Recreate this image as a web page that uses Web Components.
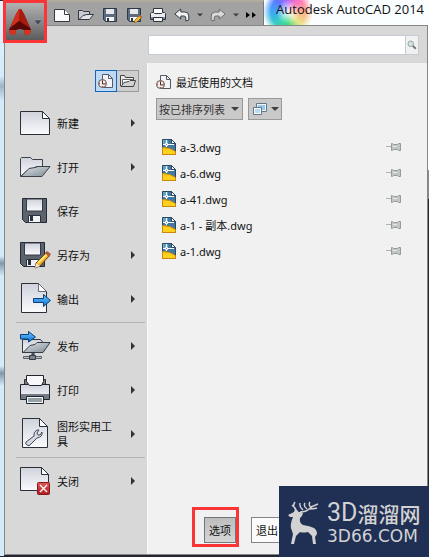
<!DOCTYPE html>
<html lang="zh-CN">
    <head>
        <meta charset="utf-8" />
        <meta name="viewport" content="width=device-width, initial-scale=1" />
        <title>Autodesk AutoCAD 2014</title>
        <style>
            html {
                font: 11px/15px "Noto Sans", "Noto Sans CJK SC", sans-serif;
                color: #111;
            }
            body {
                margin: 0;
                background: #232532;
            }
        </style>
    </head>
    <body>
        <cad-window></cad-window>

        <template id="cad-icon">
            <style>
                :host {
                    display: block;
                    flex: none;
                    width: 16px;
                    height: 16px;
                }
                :host([size="large"]) {
                    width: 32px;
                    height: 32px;
                }
                :host([size="small"]) {
                    width: 8px;
                    height: 8px;
                }
                svg {
                    display: block;
                    width: 100%;
                    height: 100%;
                }
            </style>
        </template>

        <template id="cad-quick-bar">
            <style>
                :host {
                    display: flex;
                    align-items: center;
                    gap: 8px;
                    box-sizing: border-box;
                    height: 25px;
                    padding: 2px 7px 0 50px;
                    border-top: 2px solid #b0ad9c;
                    border-right: 1px solid #777;
                    background: #a2a2a2;
                }
                button {
                    display: block;
                    padding: 0;
                    border: 0;
                    background: none;
                }
                .narrow {
                    display: flex;
                    justify-content: center;
                    width: 4px;
                }
                .narrow [size] {
                    width: 6px;
                    height: 6px;
                }
                .more {
                    width: 10px;
                }
            </style>
            <button aria-label="新建"><cad-icon name="new"></cad-icon></button>
            <button aria-label="打开"><cad-icon name="open"></cad-icon></button>
            <button aria-label="保存"><cad-icon name="save"></cad-icon></button>
            <button aria-label="另存为"><cad-icon name="saveas"></cad-icon></button>
            <button aria-label="打印"><cad-icon name="print"></cad-icon></button>
            <button aria-label="放弃"><cad-icon name="undo"></cad-icon></button>
            <button class="narrow" aria-label="放弃列表"><cad-icon name="caret" size="small"></cad-icon></button>
            <button aria-label="重做"><cad-icon name="redo"></cad-icon></button>
            <button class="narrow" aria-label="重做列表"><cad-icon name="caret" size="small"></cad-icon></button>
            <button class="narrow more" aria-label="更多"><cad-icon name="more"></cad-icon></button>
        </template>

        <template id="cad-app-button">
            <style>
                :host {
                    display: block;
                    border: 3px solid #fb3535;
                }
                button {
                    display: flex;
                    align-items: center;
                    gap: 2px;
                    width: 38px;
                    height: 37px;
                    padding: 0 2px;
                    border: 0;
                    background: linear-gradient(#b1b1b1, #858585 55%, #5b5b5b);
                }
                .logo {
                    flex: none;
                    width: 24px;
                    height: 28px;
                }
            </style>
            <button aria-label="应用程序菜单">
                <svg class="logo" viewBox="0 0 24 28">
                    <path d="M11 1h2l3 5 7 16-1 4-5 1-1-5q-4-2-8 0l-1 5-5-1-1-4L8 6z" fill="#9c170e" />
                    <path d="M11 1h1l-1 12-9 8L8 6z" fill="#cf2f1b" />
                    <path d="M12 1h1l3 5 6 14-11-7z" fill="#a81c10" />
                    <path d="M11 13l11 7 1 2-7 0q-4-2-8 0l-7 0 1-2z" fill="#5a0806" />
                    <path d="M1 22l7 0-1 5-5-1zM23 22l-7 0 1 5 5-1z" fill="#d8321e" />
                </svg>
                <cad-icon name="appcaret" size="small"></cad-icon>
            </button>
        </template>

        <template id="cad-search">
            <style>
                :host {
                    display: flex;
                    box-sizing: border-box;
                    height: 20px;
                    border: 1px solid #c5cbd2;
                    background: #fff;
                }
                input {
                    flex: 1;
                    min-width: 0;
                    padding: 0 4px;
                    border: 0;
                    outline: 0;
                    background: none;
                    font: inherit;
                }
                button {
                    display: flex;
                    align-items: center;
                    justify-content: center;
                    width: 13px;
                    padding: 0;
                    border: 0;
                    border-left: 1px solid #c5cbd2;
                    background: #f1f1f1;
                }
                cad-icon {
                    width: 10px;
                    height: 10px;
                }
            </style>
            <input type="search" aria-label="搜索" />
            <button aria-label="搜索"><cad-icon name="search"></cad-icon></button>
        </template>

        <template id="cad-menu-item">
            <style>
                :host {
                    display: block;
                }
                button {
                    display: flex;
                    align-items: center;
                    gap: 6px;
                    width: 100%;
                    height: 44px;
                    padding: 0 10px 0 14px;
                    border: 0;
                    background: none;
                    color: inherit;
                    font: inherit;
                    text-align: left;
                }
                .label {
                    flex: 1;
                    min-width: 0;
                    padding-right: 8px;
                }
            </style>
            <button>
                <cad-icon size="large"></cad-icon>
                <span class="label"><slot></slot></span>
                <cad-icon class="arrow" name="arrow" size="small"></cad-icon>
            </button>
        </template>

        <template id="cad-sidebar">
            <style>
                :host {
                    display: block;
                    padding-top: 7px;
                }
                .tabs {
                    display: flex;
                    justify-content: flex-end;
                    padding: 0 8px 9px 0;
                }
                .tabs button {
                    display: flex;
                    align-items: center;
                    justify-content: center;
                    box-sizing: border-box;
                    width: 22px;
                    height: 22px;
                    padding: 0;
                    border: 1px solid #999;
                    border-left: 0;
                    background: #cfcfcf;
                }
                .tabs .active {
                    border: 1px solid #1466bd;
                    background: #bcdaf5;
                }
                hr {
                    height: 1px;
                    margin: 1px 2px 1px 11px;
                    border: 0;
                    background: #b5b5b5;
                }
            </style>
            <div class="tabs">
                <button class="active" aria-label="最近使用的文档"><cad-icon name="recent"></cad-icon></button>
                <button aria-label="打开的文档"><cad-icon name="opendocs"></cad-icon></button>
            </div>
            <nav>
                <cad-menu-item icon="new">新建</cad-menu-item>
                <cad-menu-item icon="open">打开</cad-menu-item>
                <cad-menu-item icon="save" plain>保存</cad-menu-item>
                <cad-menu-item icon="saveas">另存为</cad-menu-item>
                <cad-menu-item icon="export">输出</cad-menu-item>
                <hr />
                <cad-menu-item icon="publish">发布</cad-menu-item>
                <cad-menu-item icon="print">打印</cad-menu-item>
                <cad-menu-item icon="tools">图形实用工具</cad-menu-item>
                <hr />
                <cad-menu-item icon="close">关闭</cad-menu-item>
            </nav>
        </template>

        <template id="cad-file">
            <style>
                :host {
                    display: flex;
                    align-items: center;
                    gap: 3px;
                    height: 26px;
                }
                a {
                    flex: 1;
                    color: inherit;
                    text-decoration: none;
                    white-space: nowrap;
                }
                button {
                    padding: 0;
                    border: 0;
                    background: none;
                }
            </style>
            <cad-icon name="dwg"></cad-icon>
            <a href="#"><slot></slot></a>
            <button aria-label="固定"><cad-icon name="pin"></cad-icon></button>
        </template>

        <template id="cad-documents">
            <style>
                :host {
                    display: flex;
                    flex-direction: column;
                    padding: 8px 8px 11px;
                    background: #f1f1f1;
                }
                h2 {
                    display: flex;
                    align-items: center;
                    gap: 4px;
                    height: 22px;
                    margin: 0 0 5px;
                    font: inherit;
                }
                .filters {
                    display: flex;
                    gap: 5px;
                    margin-bottom: 14px;
                }
                .sort {
                    display: grid;
                    grid-template-columns: 1fr 12px;
                    align-items: center;
                    width: 87px;
                }
                .sort select {
                    grid-area: 1 / 1 / 2 / 3;
                    appearance: none;
                    box-sizing: border-box;
                    height: 22px;
                    padding: 0 2px;
                    border: 1px solid #999;
                    border-radius: 0;
                    background: #c9c9c9;
                    color: #333;
                    font: inherit;
                }
                .sort cad-icon {
                    grid-area: 1 / 2;
                    pointer-events: none;
                }
                .view {
                    display: flex;
                    align-items: center;
                    justify-content: space-between;
                    box-sizing: border-box;
                    width: 34px;
                    height: 22px;
                    padding: 0 2px 0 3px;
                    border: 1px solid #999;
                    background: #c9c9c9;
                }
                .files {
                    flex: 1;
                    padding: 0 18px 0 5px;
                }
                footer {
                    display: flex;
                    gap: 15px;
                    padding-left: 48px;
                }
                .action {
                    position: relative;
                }
                .action button {
                    display: block;
                    box-sizing: border-box;
                    height: 26px;
                    padding: 0 4px;
                    border: 1px solid #858585;
                    background: #fbfbfb;
                    color: #111;
                    font: inherit;
                    white-space: nowrap;
                }
                .marked button {
                    background: linear-gradient(#bdbdbd, #d6d6d6);
                    border-color: #6f777b;
                }
                .marked::after {
                    content: "";
                    position: absolute;
                    inset: -10px -3px -4px -12px;
                    border: 3px solid #fb3535;
                    pointer-events: none;
                }
            </style>
            <h2><cad-icon name="recent"></cad-icon>最近使用的文档</h2>
            <div class="filters">
                <div class="sort">
                    <select aria-label="排序方式">
                        <option>按已排序列表</option>
                    </select>
                    <cad-icon name="caret" size="small"></cad-icon>
                </div>
                <button class="view" aria-label="显示方式">
                    <cad-icon name="view"></cad-icon>
                    <cad-icon name="caret" size="small"></cad-icon>
                </button>
            </div>
            <div class="files">
                <cad-file>a-3.dwg</cad-file>
                <cad-file>a-6.dwg</cad-file>
                <cad-file>a-41.dwg</cad-file>
                <cad-file>a-1 - 副本.dwg</cad-file>
                <cad-file>a-1.dwg</cad-file>
            </div>
            <footer>
                <div class="action marked"><button>选项</button></div>
                <div class="action"><button>退出</button></div>
            </footer>
        </template>

        <template id="cad-watermark">
            <style>
                :host {
                    display: flex;
                    gap: 6px;
                    box-sizing: border-box;
                    width: 150px;
                    height: 71px;
                    padding: 14px 4px 0 8px;
                    background: #203055;
                    color: #d2d2d2;
                }
                svg {
                    flex: none;
                    width: 34px;
                    height: 46px;
                }
                .name {
                    display: flex;
                    align-items: center;
                    height: 26px;
                    font: 500 21px/26px "Noto Sans CJK SC", sans-serif;
                    white-space: nowrap;
                }
                .latin {
                    font: 25px/26px Roboto, sans-serif;
                }
                .site {
                    font: 17px/20px "DejaVu Sans", sans-serif;
                    white-space: nowrap;
                }
            </style>
            <svg viewBox="0 0 34 46" fill="currentColor">
                <path d="M1 15l6-3 1-3 3 3h3l2 1-1 3-2 2q-1 5 3 7 7 1 11 3 3 2 3 6l-2 3 1 7h-3l-1-8-4-4q-6 1-8 0l-4 4-2 8H4l2-10-1-3Q2 26 6 17l-3 0z" />
                <path d="M11 12Q8 9 7 7t1-5M9 9L5 5M13 12q6 0 9-3t9-5M16 10q-4-3-3-7M20 9q-4-3-2-6M24 7q-3-2-1-5M22 9q5 0 8-1" fill="none" stroke="currentColor" stroke-width="1.4" />
            </svg>
            <div>
                <div class="name"><span class="latin">3D</span>溜溜网</div>
                <div class="site">3D66.COM</div>
            </div>
        </template>

        <template id="cad-window">
            <style>
                :host {
                    display: flex;
                    flex-direction: column;
                    position: relative;
                    box-sizing: border-box;
                    min-height: 100vh;
                    padding: 0 1px 2px 4px;
                    background:
                        linear-gradient(#fff 170px, #8a8a8a 170px, #8a8a8a 199px, #232532 199px) right / 1px 100% no-repeat,
                        linear-gradient(#e3f2fc, #d4ebfa 75px, #9db5c8 85px, #d4ebfa 100px, #d4ebfa 255px, #8298aa 262px, #d4ebfa 275px, #d4ebfa 365px, #8298aa 372px, #d4ebfa 385px) left / 4px calc(100% - 2px) no-repeat;
                }
                header {
                    display: flex;
                    height: 25px;
                }
                h1 {
                    flex: 1;
                    box-sizing: border-box;
                    margin: 0 -1px 0 0;
                    padding: 0 5px 0 0;
                    /* blurred wallpaper seen through the title bar */
                    background:
                        radial-gradient(circle at 24px 12px, #fafeffcc 2px, #fafeff00 12px, #fafeff00 17px, #fafeff 25px),
                        conic-gradient(at 24px 12px, #b566f2, #ff74c0, #ffb088, #e8e48a, #3fdc83, #35cfc0, #3fa9f5, #5a78ff, #b566f2);
                    font: 13px/18px "Open Sans", sans-serif;
                    text-align: right;
                    white-space: nowrap;
                    color: #111;
                }
                main {
                    display: grid;
                    grid-template-columns: 142px 1fr;
                    grid-template-rows: auto 1fr;
                    flex: 1;
                    border: 1px solid #868686;
                    background: #d8d8d8;
                }
                cad-search {
                    grid-column: 2;
                    margin: 9px 8px 8px 1px;
                }
                cad-documents {
                    border-left: 1px solid #fafafa;
                }
                cad-app-button {
                    position: absolute;
                    top: 0;
                    left: 3px;
                }
                cad-watermark {
                    position: absolute;
                    right: 0;
                    bottom: 0;
                }
            </style>
            <header>
                <cad-quick-bar></cad-quick-bar>
                <h1>Autodesk AutoCAD 2014</h1>
            </header>
            <main>
                <cad-search></cad-search>
                <cad-sidebar></cad-sidebar>
                <cad-documents></cad-documents>
            </main>
            <cad-app-button></cad-app-button>
            <cad-watermark></cad-watermark>
        </template>

        <script type="text/javascript">
            const defs = `<defs>
                <linearGradient id="paper" x2="0" y2="1"><stop stop-color="#cfd2dc"/><stop offset="1" stop-color="#fbfbfd"/></linearGradient>
                <linearGradient id="flap" x2="1" y2="1"><stop stop-color="#e0e5e9"/><stop offset="1" stop-color="#7e8a94"/></linearGradient>
                <linearGradient id="blue" x2="0" y2="1"><stop stop-color="#6ac4ff"/><stop offset="1" stop-color="#0d74d6"/></linearGradient>
                <linearGradient id="red" x2="0" y2="1"><stop stop-color="#e05a5a"/><stop offset="1" stop-color="#b01c20"/></linearGradient>
            </defs>`;
            const disk = `<path d="M3.500 3.500h24v24h-21l-3-3z" fill="#5b636e" stroke="#252a33"/>
                <path d="M7.500 4h16v12h-16z" fill="url(#paper)" stroke="#343b46"/>
                <path d="M9.500 20.500h12v7h-12z" fill="#f0f2f5" stroke="#2b313b"/><path d="M11 21h3v5h-3z" fill="#2b313b"/>`;
            const smallDisk = `<path d="M1.500 1.500h13v13h-11l-2-2z" fill="#5c6b80" stroke="#2c3748"/>
                <path d="M4 2h8v5H4z" fill="#e6e8ec"/><path d="M4 10h8v4H4z" fill="#f4f4f4"/><path d="M5 11h2v3H5z" fill="#2c3748"/>`;
            // Icons drawn on a 32 unit grid
            const big = {
                new: `<path d="M1.500 4.500h22l7 7v16h-29z" fill="url(#paper)" stroke="#2b2f38"/><path d="M23.500 4.500v7h7z" fill="#fff" stroke="#2b2f38"/>`,
                open: `<path d="M1.500 25.500v-18l1-1h9l2 2h10v7h-6l-3 2h-4z" fill="url(#paper)" stroke="#3b424b"/><path d="M2 25.500l8-8 6-1 3-1h12l-8 10z" fill="url(#flap)" stroke="#3b424b"/>`,
                save: disk,
                saveas: `<g transform="translate(-2)">${disk}</g><path d="M17 24L28 13l3 3-10 11-5 2z" fill="#f7ad18" stroke="#59411c"/><path d="M19 24l9-9" stroke="#ffe47a" stroke-width="2"/><path d="M28 12l4 3-2 3-4-4z" fill="#b05c37"/><path d="M17 24l4 3-5 2z" fill="#f3e6d5"/>`,
                export: `<path d="M2.500.5h17l8 8v21h-25z" fill="url(#paper)" stroke="#2b2f38"/><path d="M19.500.5v8h8z" fill="#fff" stroke="#626a75"/><path d="M14.500 15.500h10v-4l7 6-7 6v-4h-10z" fill="url(#blue)" stroke="#0b3d78"/>`,
                publish: `<path d="M3.500 23V9.500h18l4 5" fill="url(#paper)" stroke="#343b45"/><path d="M4 22.500l7-7 5-1 2-2h13l-7 10z" fill="url(#flap)" stroke="#343b45"/><path d="M1.500 4.500h8v-3l7 5.500-7 5v-3h-8z" fill="url(#blue)" stroke="#0b3d78"/><path d="M4.500 26.500h18v2h-18z" fill="#b9c0c6" stroke="#5b636a"/><path d="M10.500 25.500h6v4h-6zM13 23h2v2h-2z" fill="#7b858e" stroke="#343b45"/>`,
                print: `<path d="M5.500 5.500h4v6h-4zM22.500 5.500h4v6h-4z" fill="#747d86" stroke="#2b2f38"/><path d="M1.500 10.500h29v15h-29z" fill="url(#paper)" stroke="#20242c"/><path d="M2 20h28v5H2z" fill="#727b86"/><path d="M7.500 1.500h17v6l-2 4h-12l-3-4z" fill="#f8f8fa" stroke="#20242c"/><path d="M7.500 22.500h17v7h-17z" fill="#f3f5f6" stroke="#20242c"/><path d="M9 24h14v4H9z" fill="#94a2a8"/>`,
                tools: `<path d="M3.500.5h17l8 8v21h-25z" fill="url(#paper)" stroke="#2b2f38"/><path d="M20.500.5v8h8z" fill="#fff" stroke="#2b2f38"/><path d="M7 24l8-6q-1-4 3-6h2l-2 3 1 2 2 0 2-3q1 5-5 6l-6 6q-2 3-4 1-2-1-1-3z" fill="#d3d7df" stroke="#454b59"/>`,
                close: `<path d="M1.500 2.500h21l7 7v16h-28z" fill="url(#paper)" stroke="#2b2f38"/><path d="M22.500 2.500v7h7z" fill="#fff" stroke="#2b2f38"/><rect x="18.500" y="17.500" width="12" height="12" rx="1" fill="url(#red)" stroke="#8b1519"/><path d="M21 20l7 7m0-7l-7 7" stroke="#fff" stroke-width="1.300"/>`,
            };
            // Icons drawn on a 16 unit grid
            const small = {
                new: `<path d="M.5 2.500h10l5 5v7H.5z" fill="#fafafa" stroke="#333944"/><path d="M10.500 2.500v5h5" fill="#fff" stroke="#333944"/>`,
                open: `<path d="M.5 13V3.500h4l1 1h6V8" fill="#c8cbd1" stroke="#333944"/><path d="M1 12.500l4-4 4-1h6.500l-4 5z" fill="#e2e4e8" stroke="#333944"/>`,
                save: smallDisk,
                saveas: `${smallDisk}<path d="M9 13l5-5 2 2-5 5-3 1z" fill="#f9b82a" stroke="#7a4d1c" stroke-width=".6"/><path d="M14 8l2 2-1 1-2-2z" fill="#b05c37"/>`,
                print: `<path d="M.5 6.500l1-1h13l1 1v6H.500z" fill="#e9ebee" stroke="#2c333f"/><path d="M1 10h14v2H1z" fill="#7f8894"/><path d="M3.500 1.500h9v4l-1 1h-7l-1-1z" fill="#fff" stroke="#2c333f"/><path d="M3.500 10.500h9v4h-9z" fill="#f4f4f4" stroke="#2c333f"/>`,
                undo: `<path d="M.8 7l6-5v3h4q4 0 4 4v4l-3 1v-3q0-2-2-2h-3v3z" fill="#f3f3f3" stroke="#343d4b"/>`,
                redo: `<path d="M15.200 7l-6-5v3h-4q-4 0-4 4v4l3 1v-3q0-2 2-2h3v3z" fill="#dadada" stroke="#6d6d6d"/>`,
                more: `<path d="M3 5v6l4-3zM9 5v6l4-3z" fill="#000"/><path d="M3 7h2v2H3zM9 7h2v2H9z" fill="#000"/>`,
                recent: `<path d="M4.500 1.500h6l4 4v9h-10z" fill="#f4f4f6" stroke="#555b62"/><path d="M10.500 1.500v4h4" fill="none" stroke="#555b62"/><circle cx="4.500" cy="10.500" r="4" fill="#f6ece9" stroke="#585858"/><path d="M4.500 8v3H7" fill="none" stroke="#363636"/><path d="M4.500 7v1M1 10.500h1M4.500 13v1M7 10.500h1" stroke="#d74531" stroke-width="1.300"/>`,
                opendocs: `<path d="M.5 13V2.500h4l1 2h8v4" fill="#e9e9e9" stroke="#444"/><path d="M2.500 6.500h10v5h-10z" fill="#fff" stroke="#666"/><path d="M1 13.500l3-4 5-1 1-1h5.500l-2 6z" fill="#d3d3d3" stroke="#444"/>`,
                view: `<path d="M4.500 2.500h10v8h-10z" fill="#f1f5f8" stroke="#677584"/><path d="M6 4h7v5H6z" fill="#91caf3"/><path d="M1.500 6.500h8v7h-8z" fill="#f8fafb" stroke="#677584"/><path d="M3 8h5v4H3z" fill="#b7dcf5"/>`,
                dwg: `<path d="M1.500.5h9l4 4v11h-13z" fill="#4678a5" stroke="#294961"/><path d="M2 1h5v5H2z" fill="#62a6c2"/><path d="M10.500.5v4h4z" fill="#fff" stroke="#294961"/><path d="M2 5.500h11M5.500 1v7" stroke="#fff"/><path d="M4.500 4.500h2v2h-2z" fill="#5796b8" stroke="#fff"/><path d="M1.500 8.500q8 0 13 4v3h-13z" fill="#ffd11e" stroke="#ca8908"/>`,
                pin: `<path d="M1 7.500h5" stroke="#b0b0b0"/><path d="M6.500 4.500h1l1 1h4l1-1h2v7h-2l-1-1h-4l-1 1h-1z" fill="#c2c7c5" stroke="#959a98"/><path d="M8 7.500h4" stroke="#e8e8e8"/>`,
                search: `<path d="M9 9l5 5" stroke="#68767e" stroke-width="3"/><circle cx="6" cy="6" r="4.500" fill="#cfe3e4" stroke="#9a9f9f" stroke-width="1.500"/>`,
            };
            // Icons drawn on an 8 unit grid
            const tiny = {
                caret: `<path d="M0 2h8L4 6z" fill="#404040"/>`,
                appcaret: `<path d="M0 2h8L4 7z" fill="#404958" stroke="#bbb" stroke-width=".4"/>`,
                arrow: `<path d="M2 0v8l4-4z" fill="#333"/>`,
            };

            function attach(element, id) {
                const root = element.attachShadow({ mode: "open" });
                root.appendChild(
                    document.getElementById(id).content.cloneNode(true)
                );
                return root;
            }

            class CadIcon extends HTMLElement {
                static observedAttributes = ["name"];
                constructor() {
                    super();
                    this.root = attach(this, "cad-icon");
                    this.holder = document.createElement("div");
                    this.root.appendChild(this.holder);
                }
                connectedCallback() {
                    this.draw();
                }
                attributeChangedCallback() {
                    this.draw();
                }
                draw() {
                    const name = this.getAttribute("name");
                    let size = 32;
                    let shape = big[name];
                    if (this.getAttribute("size") !== "large" && small[name]) {
                        size = 16;
                        shape = small[name];
                    }
                    if (tiny[name]) {
                        size = 8;
                        shape = tiny[name];
                    }
                    this.holder.innerHTML = `<svg viewBox="0 0 ${size} ${size}" fill="none" aria-hidden="true">${defs}${shape || ""}</svg>`;
                }
            }
            customElements.define("cad-icon", CadIcon);

            class CadMenuItem extends HTMLElement {
                constructor() {
                    super();
                    this.root = attach(this, "cad-menu-item");
                }
                connectedCallback() {
                    this.root
                        .querySelector("cad-icon")
                        .setAttribute("name", this.getAttribute("icon"));
                    if (this.hasAttribute("plain")) {
                        this.root.querySelector(".arrow").style.visibility =
                            "hidden";
                    }
                }
            }
            customElements.define("cad-menu-item", CadMenuItem);

            [
                "cad-quick-bar",
                "cad-app-button",
                "cad-search",
                "cad-sidebar",
                "cad-file",
                "cad-documents",
                "cad-watermark",
                "cad-window",
            ].forEach((name) => {
                customElements.define(
                    name,
                    class extends HTMLElement {
                        constructor() {
                            super();
                            attach(this, name);
                        }
                    }
                );
            });
        </script>
    </body>
</html>
